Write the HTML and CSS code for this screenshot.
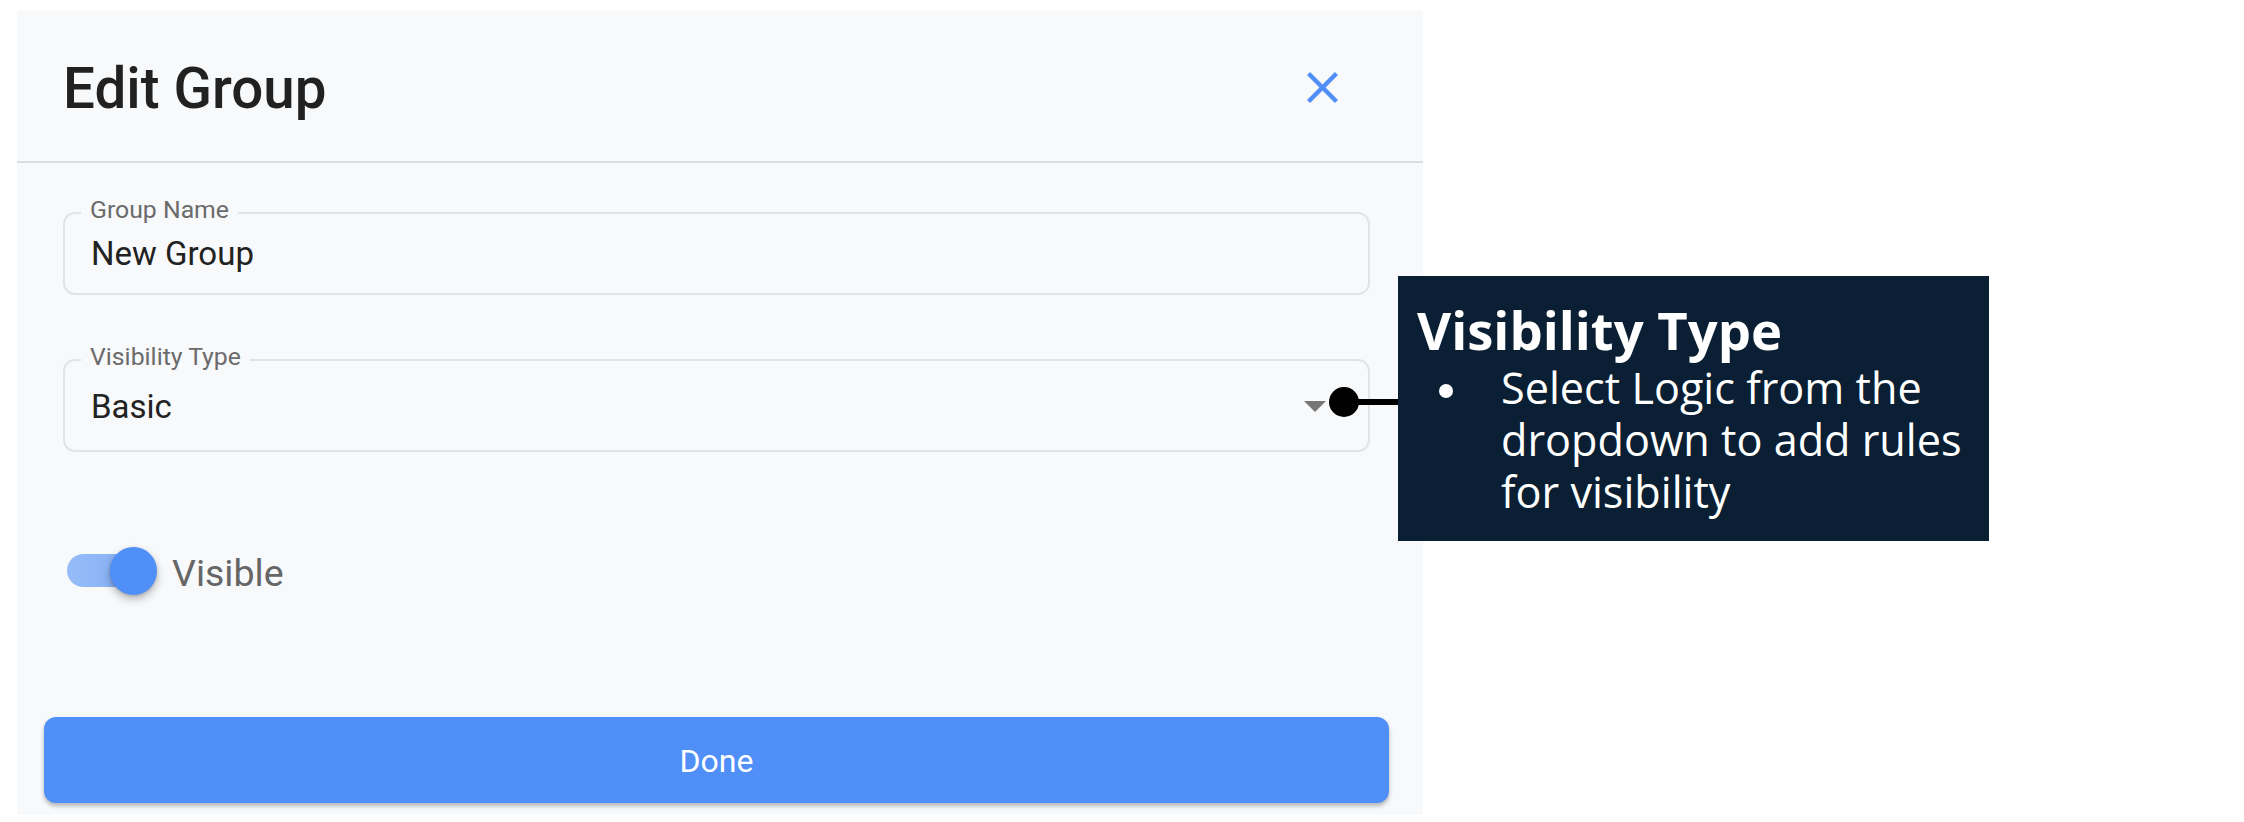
FILE: index.html
```html
<!DOCTYPE html>
<html lang="en">
<head>
<meta charset="utf-8">
<title>Edit Group</title>
<link rel="stylesheet" href="styles.css">
</head>
<body>
<div class="stage">
  <section class="panel">
    <header class="panel-header">
      <h1 class="panel-title">Edit Group</h1>
      <button class="close-btn" aria-label="Close">
        <svg width="31" height="31" viewBox="5 5 14 14" aria-hidden="true">
          <path fill="#4f8ff7" d="M19 6.41 17.59 5 12 10.59 6.41 5 5 6.41 10.59 12 5 17.59 6.41 19 12 13.41 17.59 19 19 17.59 13.41 12z"/>
        </svg>
      </button>
    </header>

    <div class="panel-body">
      <div class="field field-text">
        <span class="field-label">Group Name</span>
        <span class="field-value">New Group</span>
      </div>

      <div class="field field-select">
        <span class="field-label">Visibility Type</span>
        <span class="field-value">Basic</span>
        <span class="select-arrow"></span>
      </div>

      <div class="switch-row">
        <span class="switch">
          <span class="switch-track"></span>
          <span class="switch-thumb"></span>
        </span>
        <span class="switch-label">Visible</span>
      </div>
    </div>

    <footer class="panel-footer">
      <button class="done-btn">Done</button>
    </footer>
  </section>

  <div class="connector">
    <span class="connector-line"></span>
    <span class="connector-dot"></span>
  </div>

  <aside class="callout">
    <h2 class="callout-title">Visibility Type</h2>
    <div class="callout-item">
      <span class="callout-bullet"></span>
      <p class="callout-text">Select Logic from the dropdown to add rules for visibility</p>
    </div>
  </aside>
</div>
</body>
</html>
```

FILE: styles.css
```css
* {
  box-sizing: border-box;
}

html, body {
  margin: 0;
  padding: 0;
  background: #ffffff;
}

body {
  width: 2244px;
  height: 822px;
  overflow: hidden;
  font-family: Roboto, "Liberation Sans", sans-serif;
}

.stage {
  position: relative;
  width: 2244px;
  height: 822px;
  padding: 11px 0 0 17px;
}

/* ---------- panel ---------- */
.panel {
  width: 1406px;
  height: 804px;
  background: #f8f9fb;
  display: flex;
  flex-direction: column;
}

.panel-header {
  height: 152px;
  border-bottom: 2px solid #dcdde1;
  display: flex;
  align-items: center;
  justify-content: space-between;
  padding: 0 85px 0 46px;
}

.panel-title {
  margin: 5px 0 0;
  font-family: Roboto, "Liberation Sans", sans-serif;
  font-weight: 500;
  font-size: 56.5px;
  line-height: 64px;
  color: #212121;
}

.close-btn {
  border: 0;
  padding: 0;
  margin: 2px 0 0;
  background: transparent;
  width: 31px;
  height: 31px;
  display: flex;
}

.panel-body {
  padding: 49px 53px 0 46px;
  display: flex;
  flex-direction: column;
}

/* ---------- outlined fields ---------- */
.field {
  position: relative;
  border: 2px solid #e2e3e6;
  border-radius: 12px;
  display: flex;
  align-items: center;
  padding: 0 42px 0 26px;
}

.field-text {
  height: 83px;
  padding-top: 21px;
  padding-bottom: 20px;
}

.field-select {
  height: 93px;
  margin-top: 64px;
  padding-top: 2px;
  justify-content: space-between;
}

.field-label {
  position: absolute;
  top: -18px;
  left: 16px;
  padding: 0 9px;
  background: #f8f9fb;
  font-size: 24.8px;
  line-height: 28px;
  color: #6b6b6b;
}

.field-value {
  font-size: 33px;
  line-height: 38px;
  color: #222222;
}

.select-arrow {
  width: 0;
  height: 0;
  border-left: 11.5px solid transparent;
  border-right: 11.5px solid transparent;
  border-top: 11px solid #767676;
}

/* ---------- switch ---------- */
.switch-row {
  margin-top: 95px;
  height: 48px;
  display: flex;
  align-items: center;
  gap: 15px;
  padding-left: 4px;
}

.switch {
  position: relative;
  width: 90px;
  height: 48px;
  flex: none;
}

.switch-track {
  position: absolute;
  left: 0;
  top: 7px;
  width: 80px;
  height: 33px;
  border-radius: 17px;
  background: linear-gradient(90deg, #96bcf8 0%, #8ab3f6 60%, #7ea6ea 100%);
}

.switch-thumb {
  position: absolute;
  left: 43px;
  top: 0;
  width: 47px;
  height: 48px;
  border-radius: 50%;
  background: #4f8ff7;
  box-shadow: 0 4px 8px rgba(0, 0, 0, 0.28), 0 1px 3px rgba(0, 0, 0, 0.12);
}

.switch-label {
  font-size: 37.5px;
  line-height: 44px;
  padding-top: 3px;
  color: #666666;
}

/* ---------- footer ---------- */
.panel-footer {
  margin-top: auto;
  padding: 0 34px 12px 27px;
}

.done-btn {
  display: block;
  width: 100%;
  height: 86px;
  border: 0;
  border-radius: 12px;
  padding-top: 3px;
  background: #4f8ff7;
  color: #ffffff;
  font-family: Roboto, "Liberation Sans", sans-serif;
  font-size: 32px;
  font-weight: 400;
  box-shadow: 0 3px 4px rgba(0, 0, 0, 0.28);
}

/* ---------- annotation ---------- */
.connector {
  position: absolute;
  left: 1329px;
  top: 387px;
  width: 72px;
  height: 30px;
}

.connector-line {
  position: absolute;
  left: 20px;
  top: 12px;
  width: 52px;
  height: 6px;
  background: #000000;
}

.connector-dot {
  position: absolute;
  left: 0;
  top: 0;
  width: 30px;
  height: 30px;
  border-radius: 50%;
  background: #000000;
}

.callout {
  position: absolute;
  left: 1398px;
  top: 276px;
  width: 591px;
  height: 265px;
  background: #0a1f33;
  color: #ffffff;
  padding: 22px 8px 0 19px;
  font-family: "Open Sans", "DejaVu Sans", sans-serif;
}

.callout-title {
  margin: 0;
  font-size: 52.6px;
  line-height: 64px;
  font-weight: 700;
}

.callout-item {
  display: flex;
  align-items: flex-start;
}

.callout-bullet {
  flex: none;
  width: 14px;
  height: 14px;
  border-radius: 50%;
  background: #ffffff;
  margin: 22px 48px 0 22px;
}

.callout-text {
  margin: 0;
  flex: 1;
  font-size: 43.2px;
  line-height: 52px;
  font-weight: 400;
}
```
